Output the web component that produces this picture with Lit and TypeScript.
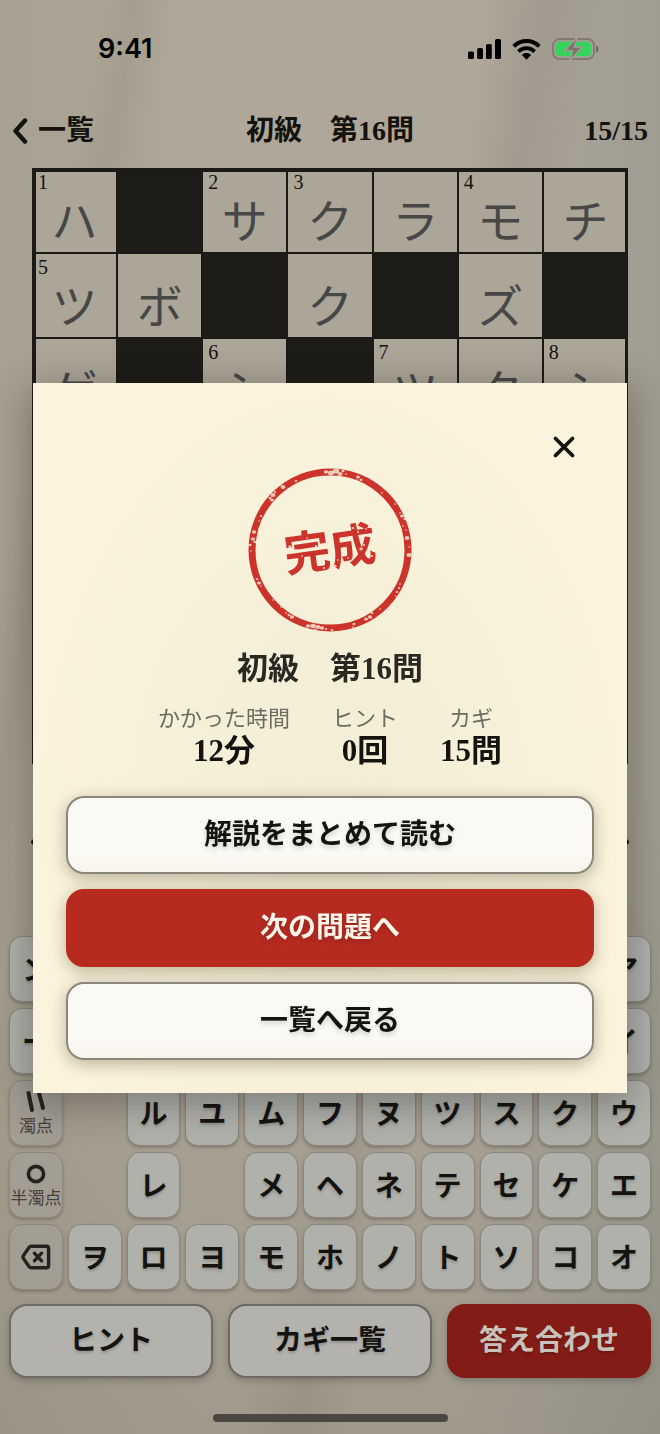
import { LitElement, html, css, svg, nothing } from "lit";
import { customElement, state } from "lit/decorators.js";

type Cell = { ch?: string; no?: number; black?: boolean };

const B: Cell = { black: true };
const E: Cell = {};

const BOARD: Cell[][] = [
  [{ ch: "ハ", no: 1 }, B, { ch: "サ", no: 2 }, { ch: "ク", no: 3 }, { ch: "ラ" }, { ch: "モ", no: 4 }, { ch: "チ" }],
  [{ ch: "ツ", no: 5 }, { ch: "ボ" }, B, { ch: "ク" }, B, { ch: "ズ" }, B],
  [{ ch: "ゲ" }, B, { ch: "シ", no: 6 }, B, { ch: "ツ", no: 7 }, { ch: "ク" }, { ch: "シ", no: 8 }],
  [E, E, E, E, E, E, E],
  [E, E, E, E, E, E, E],
  [E, E, E, E, E, E, E],
  [E, E, E, E, E, E, E],
];

// A space leaves the slot free.
const KEYS: string[] = [
  "ン         ア",
  "ー         イ",
  "゛ ルユムフヌツスクウ",
  "゜ レ メヘネテセケエ",
  "⌫ヲロヨモホノトソコオ",
];

// Worn spots in the stamp's ink: centre x, centre y, radius.
const SPECKS: [number, number, number][] = [
  [86, 13, 2.2], [91, 14, 3], [96, 12, 3.2], [100, 15, 2.6], [103, 12, 1.6], [106, 15, 1], [118, 18, 2], [121, 21, 1.5],
  [117, 21, 1], [56, 22, 1.4], [43, 28, 2.4], [40, 26, 1], [33, 36, 2.4], [32, 41, 2], [30, 39, 1.5], [35, 33, 1.2],
  [21, 57, 1.2], [19, 62, 0.8], [14, 73, 2.2], [13, 80, 2.2], [15, 83, 1.6], [10, 86, 1.6], [11, 92, 0.8],
  [17, 120, 1.4], [19, 124, 2], [21, 127, 1], [33, 141, 0.8], [41, 148, 1], [52, 158, 2.2], [49, 156, 1.5],
  [46, 154, 1], [68, 167, 2.2], [73, 167, 2.8], [78, 168, 2.6], [82, 169, 2.2], [75, 171, 1.6], [86, 170, 1.2],
  [92, 171, 1.4], [114, 165, 1.6], [113, 168, 1], [126, 160, 2], [130, 158, 2.2], [132, 154, 1.4], [140, 150, 0.8],
  [157, 133, 1.4], [159, 129, 1.2], [160, 125, 1], [156, 137, 0.8], [169, 96, 2.6], [167, 79, 2.4], [169, 88, 0.8],
  [162, 57, 2], [165, 60, 1.6], [160, 54, 1], [163, 67, 1], [166, 71, 0.8], [155, 45, 1], [142, 34, 1],
  [50, 88, 1.8], [56, 91, 1.2], [62, 97, 1], [76, 87, 1.2], [84, 109, 1.2], [95, 107, 1.6], [98, 101, 1],
  [113, 69, 1.4], [118, 73, 1.2], [126, 70, 1], [104, 80, 0.8], [121, 90, 1.8], [124, 86, 1.2], [115, 95, 1],
  [134, 92, 1.4], [132, 97, 1.2], [108, 99, 1], [70, 103, 1], [67, 79, 0.9],
];

@customElement("app-root")
export class AppRoot extends LitElement {
  @state() private open = true;

  static styles = css`
    :host {
      display: block;
      --mincho: "Liberation Serif", "Noto Sans CJK JP", serif;
      --gothic: "Noto Sans CJK JP", sans-serif;
      --ink: #14130f;
      font-family: var(--mincho);
      color: var(--ink);
    }
    * {
      box-sizing: border-box;
    }
    button {
      font: inherit;
      color: inherit;
      margin: 0;
      padding: 0;
      border: 0;
      background: none;
      cursor: pointer;
    }
    svg {
      display: block;
    }

    .screen {
      min-height: 100vh;
      display: flex;
      flex-direction: column;
      background:
        linear-gradient(100deg, transparent 11%, rgba(85, 80, 72, 0.09) 15%, transparent 19%),
        linear-gradient(100deg, transparent 54%, rgba(85, 80, 76, 0.1) 60%, transparent 66%),
        linear-gradient(transparent 55%, rgba(80, 82, 68, 0.16) 100%),
        linear-gradient(90deg, #a7a191 0%, #afa89a 30%, #afa89a 70%, #9f9c91 100%);
    }

    .status {
      height: 98px;
      padding: 0 61px 0 98px;
      display: flex;
      align-items: center;
      justify-content: space-between;
      font: 600 27px/32px Inter, sans-serif;
      color: #000;
    }
    .status-icons {
      display: flex;
      align-items: center;
      gap: 11px;
    }

    .nav {
      height: 66px;
      margin-bottom: 4px;
      padding: 0 12px;
      display: grid;
      grid-template-columns: 1fr auto 1fr;
      align-items: center;
      font-size: 28px;
      line-height: 40px;
      font-weight: 700;
    }
    .nav h1 {
      margin: 0;
      font: inherit;
    }
    .back {
      justify-self: start;
      display: flex;
      align-items: center;
      gap: 10px;
    }
    .count {
      justify-self: end;
    }

    .board {
      position: relative;
      margin: 0 32px;
      display: grid;
      grid-template-columns: repeat(7, minmax(0, 1fr));
      background: #1b1a17;
    }
    .board::after {
      content: "";
      position: absolute;
      inset: 0;
      border: 4px solid #1b1a17;
      border-right-width: 3px;
      pointer-events: none;
    }
    .cell {
      position: relative;
      aspect-ratio: 1;
      border: 1px solid #1b1a17;
      display: flex;
      align-items: center;
      justify-content: center;
      padding-top: 14px;
      overflow: hidden;
      background: #aca698;
      font: 400 46px/60px var(--gothic);
      color: #474747;
    }
    .cell.black {
      background: #1d1c19;
    }
    .no {
      position: absolute;
      top: 3px;
      left: 5px;
      font: 400 20px/20px "Liberation Serif", serif;
      color: var(--ink);
    }

    .clue {
      flex: 1;
      min-height: 120px;
      padding: 0 31px 17px;
      display: flex;
      align-items: center;
      justify-content: space-between;
    }

    .keys {
      display: grid;
      grid-template-columns: repeat(11, minmax(0, 1fr));
      gap: 6px 5px;
      padding: 0 9px;
      margin-bottom: 14px;
    }
    .key {
      height: 66px;
      padding-bottom: 3px;
      border-radius: 13px;
      border: 1px solid #8a877f;
      background: #b1b1ac;
      box-shadow: 0 2px 3px rgba(60, 55, 45, 0.3);
      font: 700 28px/40px var(--gothic);
      text-shadow: 0 2px 3px rgba(0, 0, 0, 0.2);
      display: flex;
      flex-direction: column;
      align-items: center;
      justify-content: center;
    }
    .key.fn {
      padding: 0;
      background: #a39e94;
      color: #25221e;
    }
    .key small {
      font: 400 17px/24px var(--gothic);
      color: #45413b;
      white-space: nowrap;
      text-shadow: none;
    }

    .actions {
      display: grid;
      grid-template-columns: repeat(3, minmax(0, 1fr));
      gap: 15px;
      padding: 0 9px;
    }
    .action {
      height: 74px;
      border-radius: 18px;
      border: 2px solid #6c6a65;
      background: #b3b2ad;
      box-shadow: 0 3px 6px rgba(60, 55, 45, 0.3);
      font-size: 28px;
      line-height: 40px;
      font-weight: 700;
      text-shadow: 0 2px 3px rgba(0, 0, 0, 0.2);
    }
    .action.primary {
      border-color: #831c16;
      background: #831c16;
      color: #c9c2ba;
    }
    .home {
      width: 235px;
      height: 8px;
      margin: 36px auto 12px;
      border-radius: 4px;
      background: #4a4743;
    }

    .overlay {
      position: fixed;
      inset: 0;
      padding: 42px 33px 0;
      display: flex;
      align-items: center;
    }
    .modal {
      flex: 1;
      padding: 44px 33px 33px;
      display: flex;
      flex-direction: column;
      background: radial-gradient(ellipse at 50% 60%, #f3edd6 0%, #fbf3dc 75%);
      box-shadow: 0 8px 36px 4px rgba(20, 18, 14, 0.32);
    }
    .close {
      align-self: flex-end;
      width: 40px;
      height: 40px;
      margin-right: 10px;
      display: grid;
      place-items: center;
    }
    .stamp {
      align-self: center;
      margin-top: -3px;
    }
    .stamp text {
      font: 700 46px "Noto Sans CJK JP", sans-serif;
    }
    .modal h2 {
      margin: 13px 0 0;
      text-align: center;
      font-size: 31px;
      line-height: 40px;
      font-weight: 700;
      color: #2a2823;
    }
    .stats {
      margin: 16px 0 27px;
      display: flex;
      justify-content: center;
      gap: 42px;
      text-align: center;
    }
    .stats dt {
      font-size: 22px;
      line-height: 28px;
      color: #6f6b60;
    }
    .stats dd {
      margin: 0;
      font-size: 31px;
      line-height: 36px;
      font-weight: 700;
    }
    .choices {
      display: grid;
      gap: 15px;
    }
    .choice {
      height: 78px;
      border-radius: 18px;
      border: 2px solid #89867c;
      background: linear-gradient(#fbf9f4, #fbf9f3 75%, #f7f4ec);
      box-shadow: 0 4px 16px rgba(90, 80, 50, 0.4);
      font-size: 28px;
      line-height: 40px;
      font-weight: 700;
      text-shadow: 0 3px 5px rgba(0, 0, 0, 0.16);
    }
    .choice.primary {
      border-color: #b72a20;
      background: #b72a20;
      color: #fdf6ea;
    }
  `;

  private chevron(dir: "left" | "right", label: string) {
    return html`<button aria-label=${label}>
      <svg width="14" height="26" viewBox="0 0 14 26" fill="none" stroke="#14130f" stroke-width="4" stroke-linecap="round" stroke-linejoin="round">
        <path d=${dir === "left" ? "M12 3 L2 13 L12 23" : "M2 3 L12 13 L2 23"} />
      </svg>
    </button>`;
  }

  private statusIcons() {
    return html`<div class="status-icons">
      <svg width="33" height="20" viewBox="0 0 33 20" aria-hidden="true">
        <rect x="0" y="12.5" width="6" height="7.5" rx="1.6" />
        <rect x="9.2" y="9" width="5.8" height="11" rx="1.6" />
        <rect x="18" y="5" width="5.8" height="15" rx="1.6" />
        <rect x="27" y="0" width="6" height="20" rx="1.6" />
      </svg>
      <svg width="29" height="21" viewBox="0 0 29 21" fill="none" stroke="#000" stroke-width="3.9" aria-hidden="true">
        <path d="M1.7 7.4 C8.8 0.2 20.2 0.2 27.3 7.4" />
        <path d="M6.4 12.6 C11 8 18 8 22.6 12.6" />
        <path d="M14.5 20.8 L9.9 16 C12.6 13.4 16.4 13.4 19.1 16 Z" fill="#000" stroke="none" />
      </svg>
      <svg width="47" height="22" viewBox="0 0 47 22" aria-hidden="true">
        <rect x="1" y="1" width="41" height="20" rx="6.5" fill="none" stroke="#817a74" stroke-width="1.8" />
        <path d="M44 7.5 C47.4 8.6 47.4 13.4 44 14.5 Z" fill="#6f6963" />
        <rect x="3.8" y="3.8" width="35.4" height="14.4" rx="4.2" fill="#35d25c" />
        <path d="M25.5 -1 L12.6 12.8 H20.6 L17.4 23 L30.4 9 H22.2 Z" fill="#7b746f" stroke="#a79f95" stroke-width="1.3" />
      </svg>
    </div>`;
  }

  private key(k: string) {
    if (k === " ") return html`<span></span>`;
    if (k === "゛")
      return html`<button class="key fn">
        <svg width="22" height="24" viewBox="0 0 22 24" stroke="#25221e" stroke-width="4" stroke-linecap="round" aria-hidden="true">
          <path d="M3.5 4 L7 21 M14 4 L18 19" />
        </svg>
        <small>濁点</small>
      </button>`;
    if (k === "゜")
      return html`<button class="key fn">
        <svg width="20" height="24" viewBox="0 0 20 24" fill="none" stroke="#25221e" stroke-width="3.6" aria-hidden="true">
          <circle cx="10" cy="13" r="7.6" />
        </svg>
        <small>半濁点</small>
      </button>`;
    if (k === "⌫")
      return html`<button class="key fn" aria-label="削除">
        <svg width="30" height="26" viewBox="0 0 30 26" fill="none" stroke="#25221e" stroke-width="3.4" stroke-linecap="round" stroke-linejoin="round">
          <path d="M10 2.2 H25.5 Q27.6 2.2 27.6 4.5 V21.5 Q27.6 23.8 25.5 23.8 H10 Q9 23.8 8.2 22.8 L2.4 14.4 Q1.6 13 2.4 11.6 L8.2 3.2 Q9 2.2 10 2.2 Z" />
          <path d="M13.4 9.2 L20.6 16.8 M20.6 9.2 L13.4 16.8" />
        </svg>
      </button>`;
    return html`<button class="key">${k}</button>`;
  }

  private modal() {
    return html`<div class="overlay">
      <section class="modal" role="dialog" aria-modal="true" aria-labelledby="result">
        <button class="close" aria-label="閉じる" @click=${() => (this.open = false)}>
          <svg width="24" height="24" viewBox="0 0 24 24" stroke="#14130f" stroke-width="3.8" stroke-linecap="round">
            <path d="M3.5 3.5 L20.5 20.5 M20.5 3.5 L3.5 20.5" />
          </svg>
        </button>
        <svg class="stamp" width="172" height="172" viewBox="4 5 172 172" role="img" aria-label="完成">
          <circle cx="90" cy="91" r="78" fill="none" stroke="#cb332b" stroke-width="7" />
          <text x="90" y="107" text-anchor="middle" fill="#cb332b" transform="rotate(-8 90 91)">完成</text>
          ${SPECKS.map(([x, y, r]) => svg`<ellipse cx=${x} cy=${y} rx=${r} ry=${r * 0.8} fill="#f8efd9" opacity="0.8" />`)}
        </svg>
        <h2 id="result">初級　第16問</h2>
        <dl class="stats">
          <div><dt>かかった時間</dt><dd>12分</dd></div>
          <div><dt>ヒント</dt><dd>0回</dd></div>
          <div><dt>カギ</dt><dd>15問</dd></div>
        </dl>
        <div class="choices">
          <button class="choice">解説をまとめて読む</button>
          <button class="choice primary">次の問題へ</button>
          <button class="choice">一覧へ戻る</button>
        </div>
      </section>
    </div>`;
  }

  render() {
    return html`
      <main class="screen" lang="ja">
        <div class="status"><span>9:41</span>${this.statusIcons()}</div>
        <header class="nav">
          <button class="back">
            <svg width="16" height="28" viewBox="0 0 16 28" fill="none" stroke="#14130f" stroke-width="4.4" stroke-linecap="round" stroke-linejoin="round" aria-hidden="true">
              <path d="M13 3.5 L3.5 14 L13 24.5" />
            </svg>
            <span>一覧</span>
          </button>
          <h1>初級　第16問</h1>
          <span class="count">15/15</span>
        </header>
        <div class="board">
          ${BOARD.flat().map(
            (c) => html`<div class="cell ${c.black ? "black" : ""}">
              ${c.no ? html`<span class="no">${c.no}</span>` : nothing}${c.ch ?? nothing}
            </div>`
          )}
        </div>
        <div class="clue">${this.chevron("left", "前のカギ")}${this.chevron("right", "次のカギ")}</div>
        <div class="keys">${KEYS.map((row) => [...row].map((k) => this.key(k)))}</div>
        <div class="actions">
          <button class="action">ヒント</button>
          <button class="action">カギ一覧</button>
          <button class="action primary">答え合わせ</button>
        </div>
        <div class="home"></div>
      </main>
      ${this.open ? this.modal() : nothing}
    `;
  }
}
